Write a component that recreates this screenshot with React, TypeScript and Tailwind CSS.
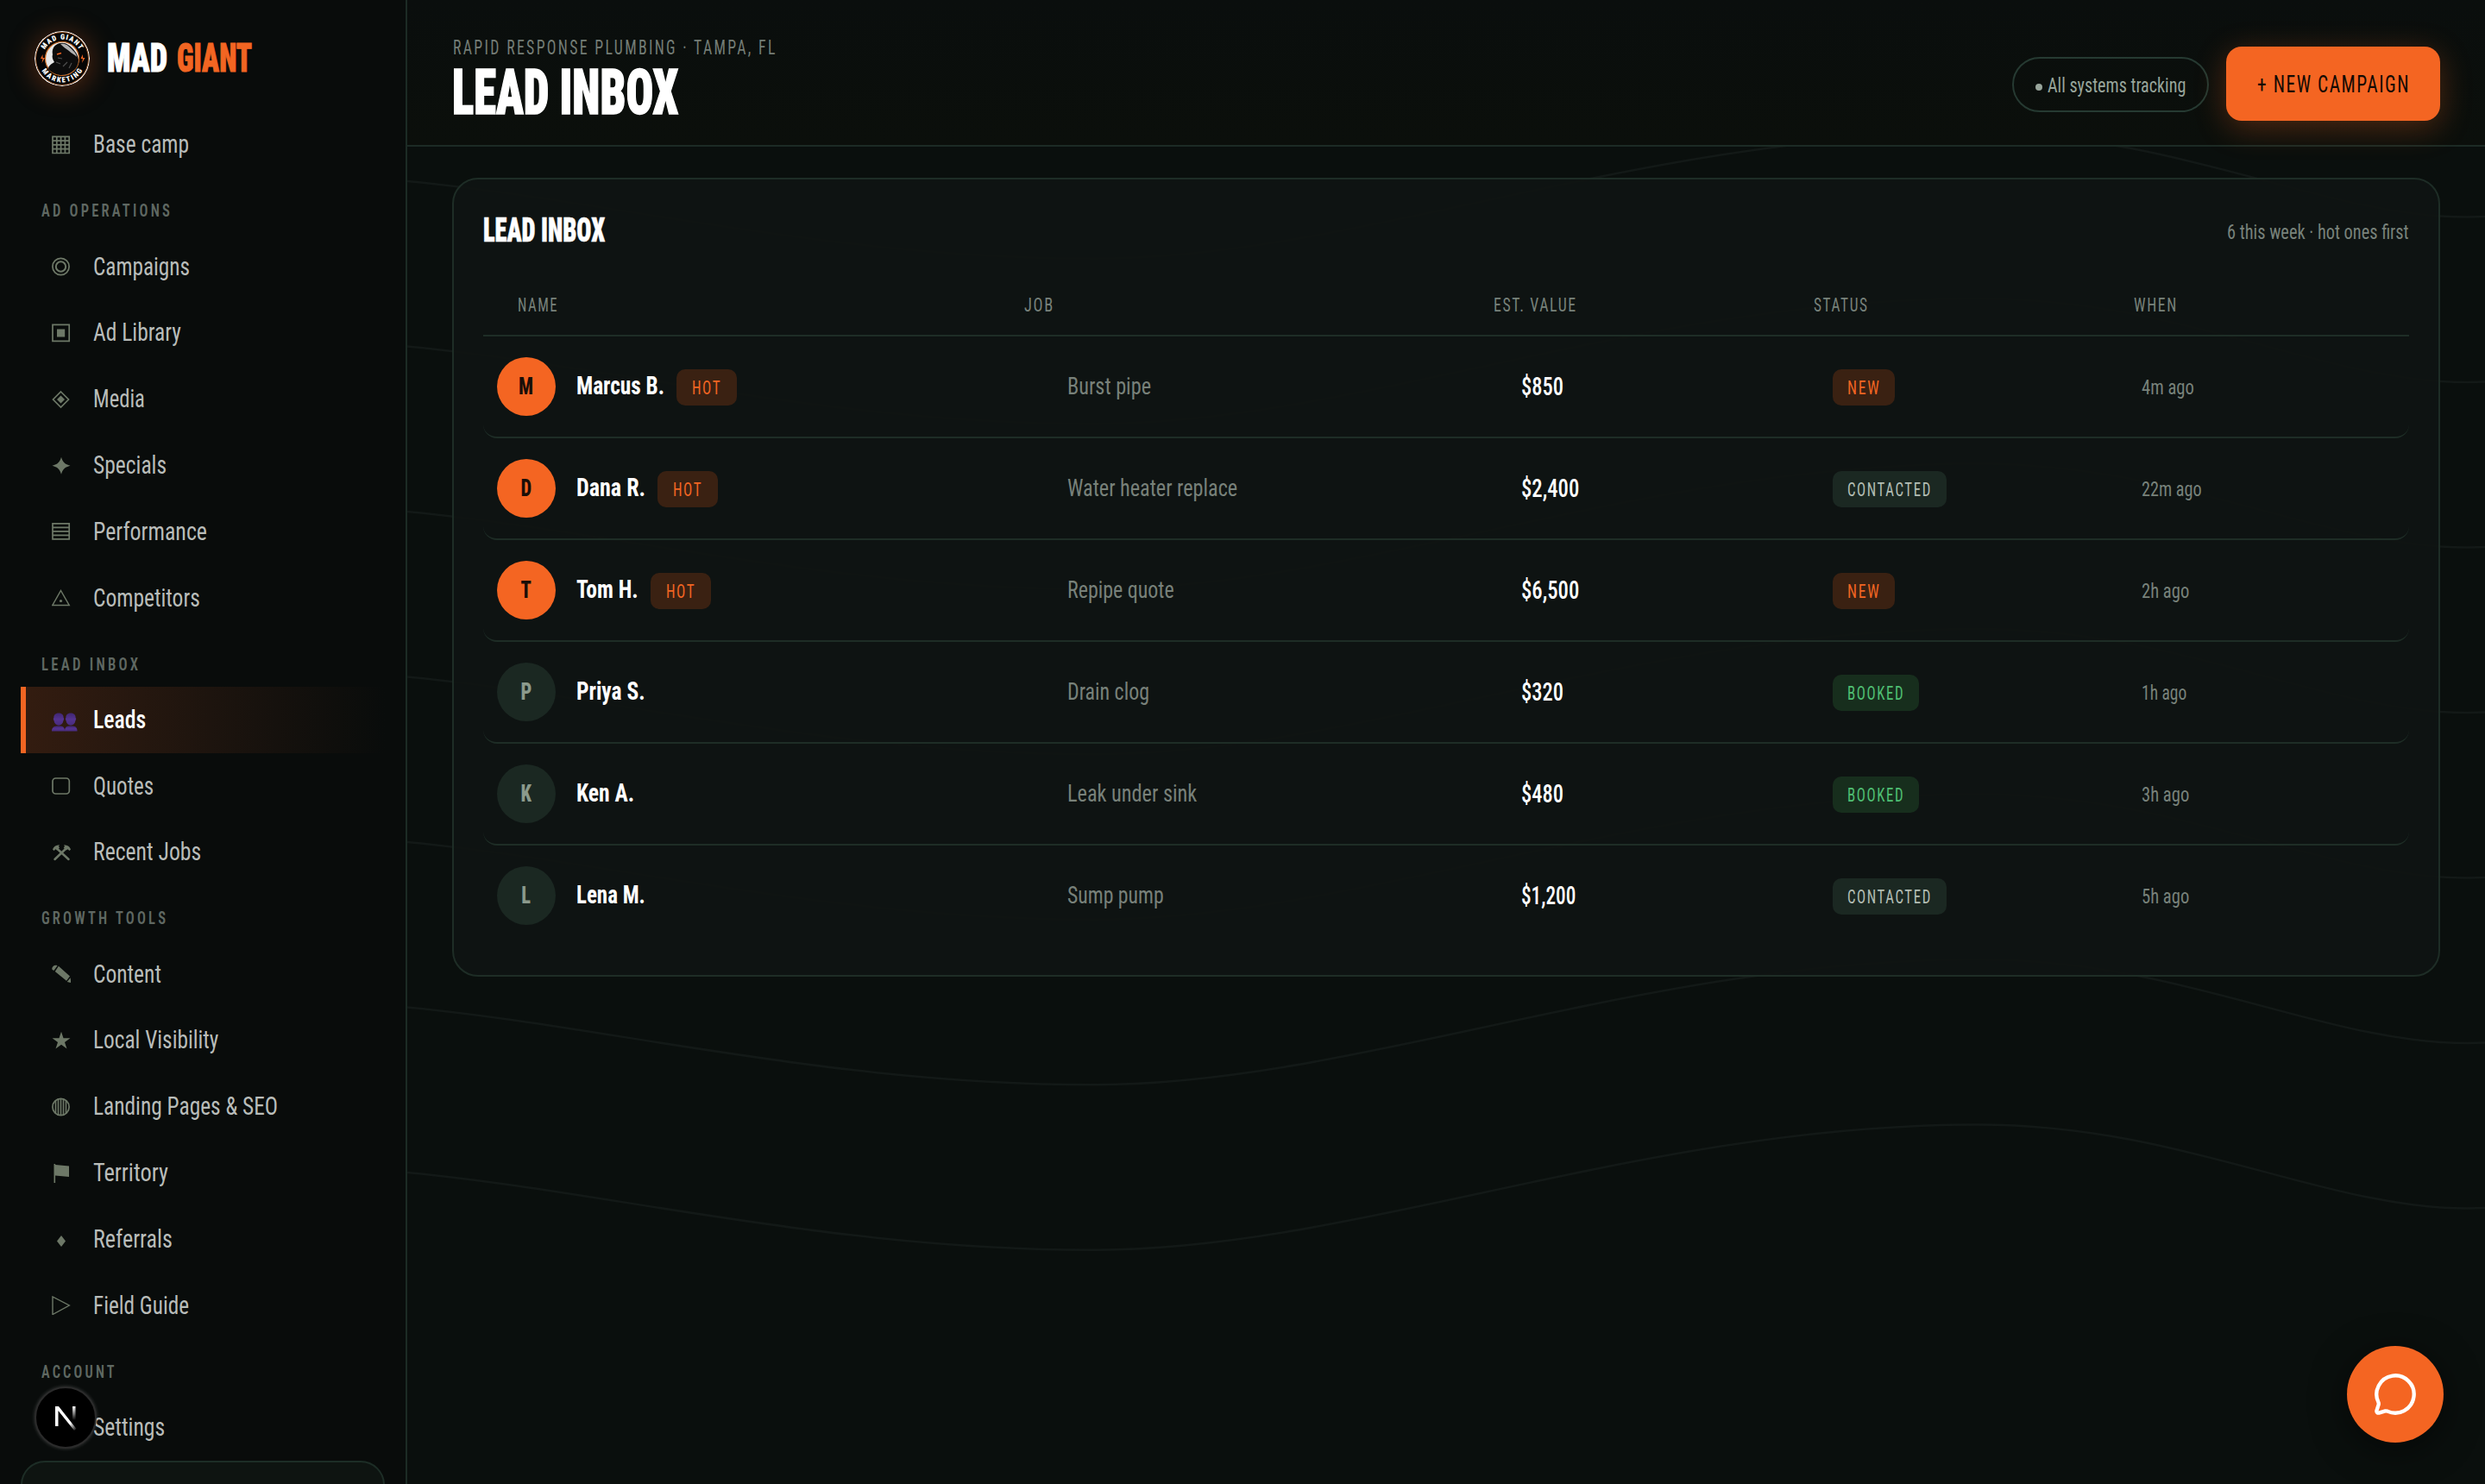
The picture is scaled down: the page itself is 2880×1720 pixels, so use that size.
import React, { useLayoutEffect, useRef, useState } from "react";
import { MessageCircle } from "lucide-react";

// Squeezes its text horizontally so that it takes exactly `w` pixels
const Fit = ({ w, className = "", children }: { w: number; className?: string; children: React.ReactNode }) => {
  const ref = useRef<HTMLSpanElement>(null);
  const [scale, setScale] = useState(1);

  useLayoutEffect(() => {
    if (ref.current) setScale(w / ref.current.offsetWidth);
  }, [w]);

  return (
    <span className={`inline-block shrink-0 whitespace-nowrap ${className}`} style={{ width: w }}>
      <span ref={ref} className="inline-block origin-left" style={{ transform: `scaleX(${scale})` }}>
        {children}
      </span>
    </span>
  );
};

const Icon = ({ name }: { name: string }) => {
  if (name === "leads") {
    return (
      <svg width="30" height="24" viewBox="0 0 30 24" className="mt-[8px] overflow-visible">
        <defs>
          <linearGradient id="bust" x1="0" y1="0" x2="0" y2="1">
            <stop offset="0" stopColor="#3f2672" />
            <stop offset="0.5" stopColor="#54338f" />
            <stop offset="1" stopColor="#472b7d" />
          </linearGradient>
        </defs>
        <g fill="url(#bust)">
          <path d="M8 0.5c4 0 5.8 2.4 5.6 5.6l.7.9-.9 2.6c-.5 3.3-2.6 5.2-5.4 5.2s-4.9-1.900-5.400-5.200L1.700 7l.7-.9C2.200 2.900 4 .5 8 .5z" />
          <path d="M22 0.5c4 0 5.800 2.400 5.600 5.600l.7.9-.9 2.600c-.5 3.300-2.600 5.200-5.400 5.200s-4.900-1.900-5.400-5.200L15.700 7l.7-.9C16.200 2.900 18 .5 22 .5z" />
          <path d="M0 21.500c0-4 2-5.500 5.500-6h5c3 .4 4.500 2 4.500 6z" />
          <path d="M15 21.500c0-4 1.500-5.500 4.500-6h5c3.500.5 5 2 5 6z" />
        </g>
      </svg>
    );
  }
  return (
    <svg width="22" height="22" viewBox="0 0 22 22" fill="none" stroke="#6d7867" strokeWidth="1.700">
      {name === "grid" && (
        <path d="M1 1.300h19.200v19.200H1zM1 6.100h19.200M1 10.900h19.200M1 15.700h19.200M5.800 1.300v19.200M10.600 1.300v19.200M15.400 1.300v19.200" />
      )}
      {name === "target" && (
        <>
          <circle cx="10.500" cy="11" r="9.600" />
          <circle cx="10.500" cy="11" r="5.700" strokeWidth="2" />
        </>
      )}
      {name === "library" && (
        <>
          <path d="M1 1.300h19.200v19H1z" />
          <path d="M6 6.500h9.200v9H6z" fill="#6d7867" stroke="none" />
        </>
      )}
      {name === "media" && (
        <>
          <path d="M10.500 2l9 9-9 9-9-9z" />
          <path d="M10.500 6.500L15 11l-4.500 4.500L6 11z" fill="#6d7867" stroke="none" />
        </>
      )}
      {name === "spark" && (
        <path d="M11 .8c1.600 5.800 4.200 8.400 10.500 10-6.300 1.600-8.900 4.200-10.500 10-1.600-5.800-4.200-8.400-10.500-10C6.800 9.200 9.400 6.600 11 .8z" fill="#6d7867" stroke="none" />
      )}
      {name === "rows" && <path d="M1 1.800h19.200v18H1zM1 6.300h19.200M1 10.800h19.200M1 15.300h19.200" />}
      {name === "warn" && (
        <>
          <path d="M10.500 2.500l9.700 17H.8z" strokeWidth="1.500" />
          <circle cx="10.500" cy="14.500" r="1.600" fill="#6d7867" stroke="none" />
        </>
      )}
      {name === "quote" && <rect x="1" y="2" width="19.300" height="18" rx="3.500" />}
      {name === "hammers" && (
        <>
          <path d="M6 6.500l13.500 12.500M16.500 6.500L3.500 19" strokeWidth="2.500" strokeLinecap="round" />
          <path d="M1 7.500c1-3 3.500-5 8-5.200l-1 1.700 1 1.500-3 3-1.500-1.300L2.500 9zM22 7.500c-1-3-3.500-5-8-5.200l1 1.700-1.300 1.500 3 3 1.700-1.300L20.500 9z" fill="#6d7867" stroke="none" />
        </>
      )}
      {name === "pencil" && (
        <path d="M.3 5C0 2 3.500-.3 6.500 1.200L2.600 6.800C1.400 6.600.4 6.200.3 5zM7.900 1.800L21 13.500l-4 5.200L3.800 8zM21.600 15.300l.8 5.700-4.700-.9z" fill="#6d7867" stroke="none" />
      )}
      {name === "star" && (
        <path d="M11 .8l2.500 7.500h7.900l-6.400 4.600 2.500 7.600-6.500-4.700-6.500 4.700 2.500-7.600L.6 8.300h7.900z" fill="#6d7867" stroke="none" />
      )}
      {name === "globe" && (
        <>
          <circle cx="10.500" cy="11" r="9.600" />
          <path d="M4.500 4v14M7.500 2v18M10.500 1.500v19M13.500 2v18M16.500 4v14" strokeWidth="1.600" />
        </>
      )}
      {name === "flag" && (
        <path d="M2.500 0h1.600v1L20 2.500v12.500L4.100 13.500V22H2.500z" fill="#6d7867" stroke="none" />
      )}
      {name === "diamond" && <path d="M11 7l5 6.500-5 6.500-5-6.500z" fill="#6d7867" stroke="none" />}
      {name === "play" && <path d="M1 1v20.500L20.300 11z" strokeWidth="1.400" />}
      {name === "gear" && <circle cx="10.500" cy="11" r="8" strokeDasharray="3 2" />}
    </svg>
  );
};

const sections = [
  { title: "", w: 0, items: [{ icon: "grid", label: "Base camp", w: 111 }] },
  {
    title: "AD OPERATIONS",
    w: 152,
    items: [
      { icon: "target", label: "Campaigns", w: 112 },
      { icon: "library", label: "Ad Library", w: 102 },
      { icon: "media", label: "Media", w: 60 },
      { icon: "spark", label: "Specials", w: 85 },
      { icon: "rows", label: "Performance", w: 132 },
      { icon: "warn", label: "Competitors", w: 124 },
    ],
  },
  {
    title: "LEAD INBOX",
    w: 115,
    items: [
      { icon: "leads", label: "Leads", w: 61, active: true },
      { icon: "quote", label: "Quotes", w: 70 },
      { icon: "hammers", label: "Recent Jobs", w: 125 },
    ],
  },
  {
    title: "GROWTH TOOLS",
    w: 147,
    items: [
      { icon: "pencil", label: "Content", w: 79 },
      { icon: "star", label: "Local Visibility", w: 145 },
      { icon: "globe", label: "Landing Pages & SEO", w: 214 },
      { icon: "flag", label: "Territory", w: 87 },
      { icon: "diamond", label: "Referrals", w: 92 },
      { icon: "play", label: "Field Guide", w: 111 },
    ],
  },
  { title: "ACCOUNT", w: 88, items: [{ icon: "gear", label: "Settings", w: 83 }] },
];

const leads = [
  { name: "Marcus B.", nw: 102, hot: true, job: "Burst pipe", jw: 97, value: "$850", vw: 49, status: "NEW", when: "4m ago", ww: 61 },
  { name: "Dana R.", nw: 80, hot: true, job: "Water heater replace", jw: 197, value: "$2,400", vw: 67, status: "CONTACTED", when: "22m ago", ww: 70 },
  { name: "Tom H.", nw: 72, hot: true, job: "Repipe quote", jw: 124, value: "$6,500", vw: 67, status: "NEW", when: "2h ago", ww: 55 },
  { name: "Priya S.", nw: 80, hot: false, job: "Drain clog", jw: 95, value: "$320", vw: 49, status: "BOOKED", when: "1h ago", ww: 52 },
  { name: "Ken A.", nw: 67, hot: false, job: "Leak under sink", jw: 150, value: "$480", vw: 49, status: "BOOKED", when: "3h ago", ww: 55 },
  { name: "Lena M.", nw: 80, hot: false, job: "Sump pump", jw: 112, value: "$1,200", vw: 63, status: "CONTACTED", when: "5h ago", ww: 55 },
];

const statuses: Record<string, { w: number; className: string }> = {
  NEW: { w: 38, className: "bg-[#3a2112] text-[#f26522]" },
  CONTACTED: { w: 98, className: "bg-[#1b2822] text-[#b3beb5]" },
  BOOKED: { w: 66, className: "bg-[#172e1d] text-[#4fbf73]" },
};

const Logo = () => (
  <svg viewBox="0 0 64 64" className="size-16 shrink-0 rounded-full shadow-[0_4px_32px_rgba(242,101,34,0.35)]">
    <defs>
      <path id="arc-top" d="M9.500 32a22.500 22.500 0 0 1 45 0" />
      <path id="arc-bottom" d="M4.500 32a27.500 27.500 0 0 0 55 0" />
    </defs>
    <circle cx="32" cy="32" r="32" fill="#fff" />
    <circle cx="32" cy="32" r="30.500" fill="#050505" stroke="#8a4a1c" strokeWidth="1" />
    <circle cx="32" cy="32" r="19.500" fill="#e8e8e8" stroke="#c96a24" strokeWidth="1.200" />
    <path d="M16 44c0-4 4-6 7-8-2-3-3-6-2-9-1-5 1-9 4-11 4-3 10-3 14 0 6 4 11 10 12 17 0 5-2 10-6 13-8 7-21 7-29-2z" fill="#0c0c0c" />
    <path d="M30 15c6-1 9 2 12 5 3 3 6 5 7 10-3-3-6-4-9-7-3-2-7-5-10-8z" fill="#b0b0b0" />
    <path d="M27 31l5 1M25 36l5 2M33 41l5-5M40 43l3-6" stroke="#4d4d4d" strokeWidth="1.200" />
    <path d="M26 27l5-1.500" stroke="#f26522" strokeWidth="1.700" />
    <path d="M9.500 27l-2.500 5h2.500l-1 5 3.500-6H9.500zM56 27l-2.500 5H56l-1 5 3.500-6H56z" fill="#f26522" />
    <g fill="#fff" className="font-[Roboto] text-[8.500px] font-black font-stretch-condensed">
      <text textAnchor="middle">
        <textPath href="#arc-top" startOffset="50%" textLength="49">MAD GIANT</textPath>
      </text>
      <text textAnchor="middle">
        <textPath href="#arc-bottom" startOffset="50%" textLength="57">MARKETING</textPath>
      </text>
    </g>
  </svg>
);

const Sidebar = () => (
  <aside className="relative flex h-full w-[472px] shrink-0 flex-col border-r-2 border-[#1c2b25] bg-[#090c0b] px-6">
    <div className="flex h-[129.600px] shrink-0 pl-4 pt-9">
      <Logo />
      <div className="ml-5 flex h-[62px] items-center text-[46px] font-black [-webkit-text-stroke:1px]">
        <Fit w={70} className="text-white">MAD</Fit>
        <Fit w={87} className="ml-[11px] text-[#f26522]">GIANT</Fit>
      </div>
    </div>
    {sections.map((section) => (
      <div key={section.title} className="shrink-0">
        {section.title && (
          <div className="h-[64.400px] pl-6 pt-[26px] text-[20.500px] leading-6 font-semibold tracking-[4px] text-[#5f6862]">
            <Fit w={section.w}>{section.title}</Fit>
          </div>
        )}
        {section.items.map((item) => (
          <div
            key={item.label}
            className={
              item.active
                ? "flex h-[76.800px] items-center border-l-[6px] border-[#f26522] bg-linear-to-r from-[#331c10] to-[#090c0b] pl-[30px] font-medium text-white"
                : "flex h-[76.800px] items-center border-l-[6px] border-transparent pl-[30px] text-[#b9bdba]"
            }
          >
            <span className="w-[48px]">
              <Icon name={item.icon} />
            </span>
            <Fit w={item.w} className="-mt-[2px] text-[30px]">{item.label}</Fit>
          </div>
        ))}
      </div>
    ))}
    <div className="h-40 shrink-0 rounded-[28px] border-2 border-[#1d2d26] bg-[#0e1411]" />
    {/* dev tools badge */}
    <div className="absolute left-[40px] top-[1607px] flex size-[72px] items-center justify-center rounded-full border-2 border-[#2b2b2b] bg-black shadow-[0_0_4px_rgba(255,255,255,0.2)]">
      <svg width="26" height="30" viewBox="0 0 26 30">
        <defs>
          <linearGradient id="n-leg" x1="0" y1="0" x2="0" y2="1">
            <stop offset="0" stopColor="#fff" />
            <stop offset="1" stopColor="#fff" stopOpacity="0" />
          </linearGradient>
          <linearGradient id="n-diag" x1="0" y1="0" x2="1" y2="1">
            <stop offset="0.700" stopColor="#fff" />
            <stop offset="1" stopColor="#fff" stopOpacity="0" />
          </linearGradient>
        </defs>
        <path d="M1 25V2h4l20.500 26-2.500 2L4.500 7v18z" fill="url(#n-diag)" />
        <path d="M21 2h3.500v16H21z" fill="url(#n-leg)" />
      </svg>
    </div>
  </aside>
);

const Contours = () => (
  <svg className="absolute inset-0" width="2880" height="1720" fill="none" stroke="#131917" strokeWidth="2.500">
    {[0, 1, 2, 3, 4, 5, 6].map((i) => (
      <path
        key={i}
        transform={`translate(0 ${i * -191.500})`}
        d="M472 1359C700 1380 960 1448.700 1267 1448.700S1900 1303.500 2292 1303.500C2530 1303.500 2690 1400.500 2860 1400.500L2880 1400"
      />
    ))}
  </svg>
);

const Header = () => (
  <header className="flex h-[170px] shrink-0 justify-between border-b-2 border-[#1c2b25] bg-linear-to-b from-[#0a0e0d] to-[#0b0f0b] px-[52px]">
    <div className="flex flex-col pt-[42px]">
      <Fit w={376} className="ml-px text-[23px] leading-7 tracking-[3px] text-[#747d76]">RAPID RESPONSE PLUMBING · TAMPA, FL</Fit>
      <Fit w={262} className="text-[72px] leading-[76px] font-black text-white [-webkit-text-stroke:1.500px]">LEAD INBOX</Fit>
    </div>
    <div className="mt-[54px] flex h-[86px] items-center gap-5">
      <div className="mt-[2px] flex h-16 w-[228px] items-center rounded-full border-2 border-[#263a32] pl-[25px] text-[24px] text-[#98a59b]">
        <span className="mr-[6px] mt-[6px] size-2 rounded-full bg-[#98a59b]" />
        <Fit w={160} className="mt-[2px]">All systems tracking</Fit>
      </div>
      <div className="flex h-[86px] w-[248px] items-center rounded-[18px] bg-[#f46522] pl-[36px] text-[28px] tracking-[2px] text-[#130a04] shadow-[0_8px_36px_rgba(242,101,34,0.3)]">
        <Fit w={177} className="mt-[2px]">+ NEW CAMPAIGN</Fit>
      </div>
    </div>
  </header>
);

const LeadTable = () => (
  <section className="mx-[52px] mt-9 flex h-[926px] flex-col rounded-[30px] border-2 border-[#1e2d26] bg-[#0f1412]/92 px-[34px]">
    <div className="flex h-[116px] items-center justify-between pt-[2px]">
      <Fit w={141} className="text-[38px] font-black text-white [-webkit-text-stroke:0.600px]">LEAD INBOX</Fit>
      <Fit w={211} className="mt-1 text-[24px] text-[#78827b]">6 this week · hot ones first</Fit>
    </div>
    <div className="grid h-[66px] grid-cols-[587px_544px_371px_371px_1fr] items-center border-b-2 border-[#1e2d26] pl-10 text-[22px] tracking-[2px] text-[#78827b]">
      <Fit w={47} className="-mt-[6px]">NAME</Fit>
      <Fit w={35} className="-mt-[6px]">JOB</Fit>
      <Fit w={97} className="-mt-[6px]">EST. VALUE</Fit>
      <Fit w={64} className="-mt-[6px]">STATUS</Fit>
      <Fit w={51} className="-mt-[6px]">WHEN</Fit>
    </div>
    {leads.map((lead, i) => (
      <div
        key={lead.name}
        className={`grid h-[118px] shrink-0 grid-cols-[661px_526px_361px_358px_1fr] items-center rounded-2xl pl-4 ${
          i < leads.length - 1 ? "border-b-2 border-[#1e2d26]" : "border-b-2 border-transparent"
        }`}
      >
        <div className="flex items-center">
          <div
            className={`flex size-[68px] items-center justify-center rounded-full text-[28px] font-extrabold ${
              lead.hot ? "bg-[#f46522] text-[#1a0e08]" : "bg-[#1b2822] text-[#8b9a8c]"
            }`}
          >
            <span className="scale-x-80">{lead.name[0]}</span>
          </div>
          <Fit w={lead.nw} className="ml-6 text-[29px] font-bold text-white">{lead.name}</Fit>
          {lead.hot && (
            <div className="ml-[14px] mt-[2px] flex h-[42px] w-[70px] items-center rounded-[10px] bg-[#3a2112] pl-[18px] text-[21.500px] tracking-[2px] text-[#f26522]">
              <Fit w={34} className="mt-[2px]">HOT</Fit>
            </div>
          )}
        </div>
        <Fit w={lead.jw} className="text-[28px] text-[#78817a]">{lead.job}</Fit>
        <Fit w={lead.vw} className="text-[29.500px] font-medium text-white">{lead.value}</Fit>
        <div className={`mt-[2px] flex h-[42px] w-fit items-center rounded-[10px] px-[17px] text-[21.500px] tracking-[2px] ${statuses[lead.status].className}`}>
          <Fit w={statuses[lead.status].w} className="mt-[2px]">{lead.status}</Fit>
        </div>
        <Fit w={lead.ww} className="mt-[2px] text-[24px] text-[#78827b]">{lead.when}</Fit>
      </div>
    ))}
  </section>
);

export default function App() {
  return (
    <div className="relative flex h-[1720px] w-[2880px] overflow-hidden bg-[#0a0f0d] font-[Roboto,sans-serif] font-stretch-condensed">
      <Contours />
      <Sidebar />
      <main className="relative flex flex-1 flex-col">
        <Header />
        <LeadTable />
      </main>
      <button className="absolute right-12 bottom-12 flex size-28 items-center justify-center rounded-full bg-[#f46522] text-white shadow-[0_8px_40px_rgba(0,0,0,0.5)]">
        <MessageCircle size={52} strokeWidth={2} />
      </button>
    </div>
  );
}
